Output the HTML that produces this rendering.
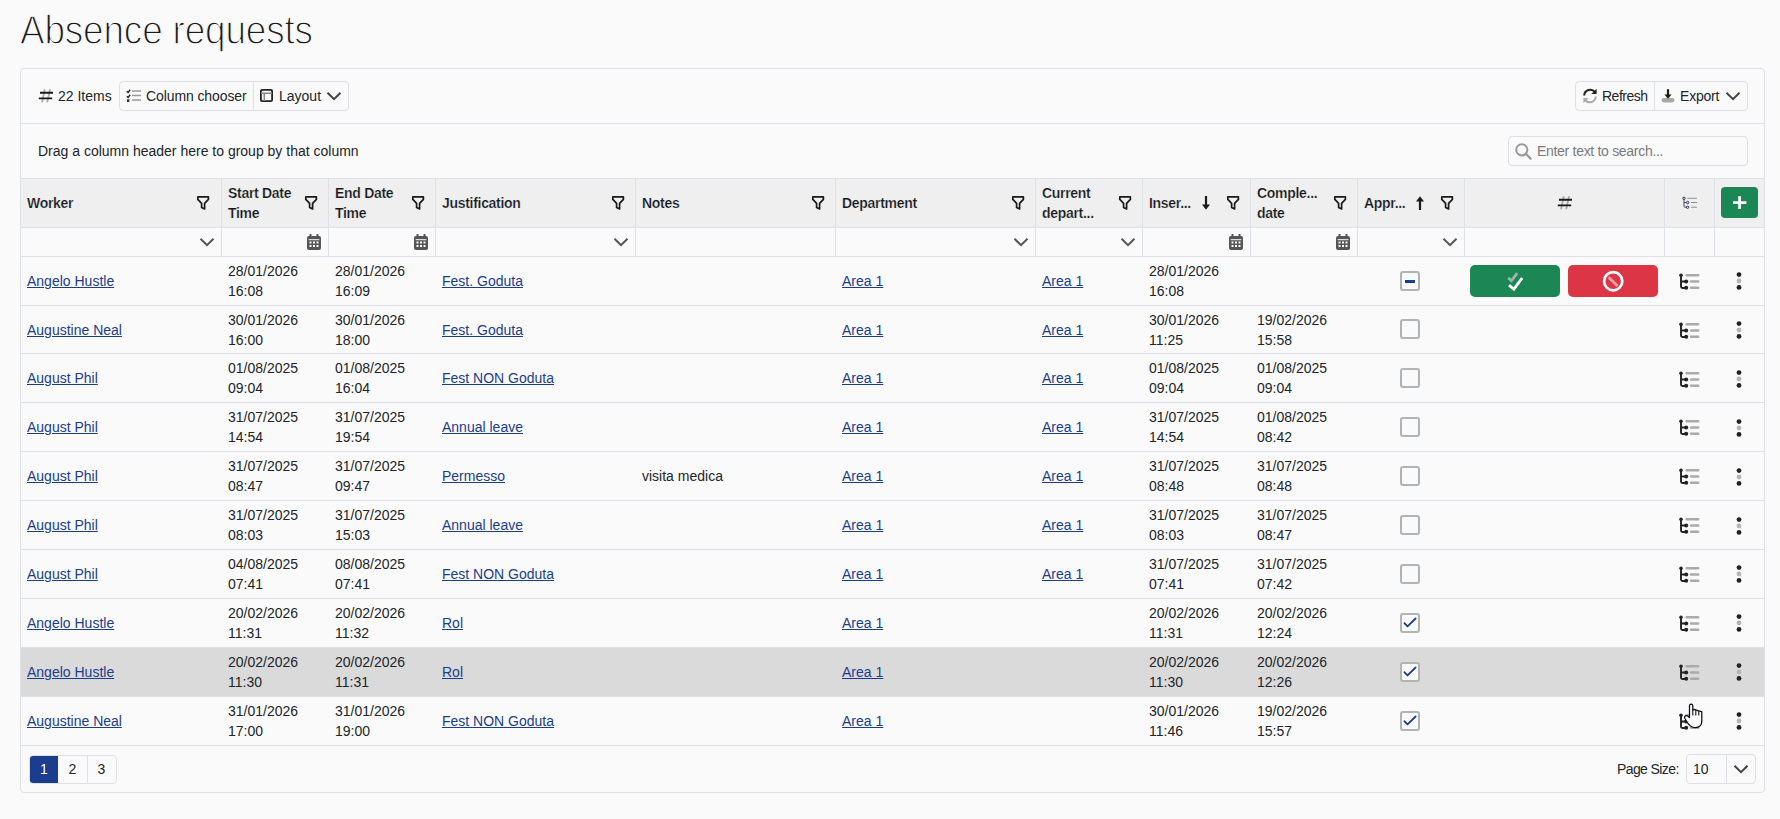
<!DOCTYPE html>
<html><head><meta charset="utf-8"><title>Absence requests</title>
<style>
*{box-sizing:border-box;margin:0;padding:0}
html,body{width:1780px;height:819px;overflow:hidden;background:#fafafa}
body{font-family:"Liberation Sans",sans-serif;font-size:14px;color:#212529;position:relative}
.abs{position:absolute}
.t{position:absolute;white-space:nowrap;line-height:20px}
.title{position:absolute;left:20px;top:3.6px;font-size:41.5px;line-height:52px;color:#1a1a1a;transform:scaleX(0.89);transform-origin:0 0;letter-spacing:-0.2px;-webkit-text-stroke:1.3px #fafafa}
.card{position:absolute;left:20px;top:68px;width:1745px;height:725px;border:1px solid #dde1e6;border-radius:4px;background:#fafafa}
.hl{position:absolute;background:#dde1e6;height:1px}
.vl{position:absolute;background:#dde1e6;width:1px}
.hdr{position:absolute;left:21px;top:179px;width:1743px;height:48px;background:#efefef}
.ht{position:absolute;font-weight:bold;line-height:20px;white-space:nowrap;letter-spacing:-0.3px;color:#15181b;-webkit-text-stroke:0.2px #efefef}
.fi{position:absolute}
a{color:#1b3d8f;text-decoration:underline;text-underline-offset:2px}
.lnk{position:absolute;line-height:20px;white-space:nowrap;color:#1b3d8f;text-decoration:underline;text-underline-offset:0.5px;text-decoration-thickness:1px}
.btngrp{position:absolute;border:1px solid #dde1e6;border-radius:4px;background:#fafafa}
.cb{position:absolute;width:20px;height:20px;border:2px solid #b1b4b7;border-radius:3px;background:#fafafa}
.sel{position:absolute;left:21px;width:1743px;background:#dadada}
</style></head><body>

<div class="title">Absence requests</div>
<div class="card"></div>
<div class="hl" style="left:21px;top:123px;width:1743px"></div>
<svg class="abs" style="left:38px;top:88px" width="16" height="16" viewBox="0 0 16 16"><path d="M6.8 1.3L4 14.2M12 1.3L9.2 14.2" stroke="#aaa" stroke-width="1.8"/><path d="M2 4.8H15M0.8 10.4H14.2" stroke="#1a1a1a" stroke-width="1.9"/></svg>
<div class="t" style="left:58px;top:86px">22 Items</div>
<div class="btngrp" style="left:119px;top:81px;width:230px;height:30px"></div>
<div class="vl" style="left:253px;top:82px;height:28px"></div>
<svg class="abs" style="left:126px;top:89px" width="15" height="13" viewBox="0 0 15 13"><path d="M0.8 2.2l1.3 1.3L4.2 0.8M0.8 7.2l1.3 1.3L4.2 5.8" fill="none" stroke="#222" stroke-width="1.4"/><rect x="1" y="10.4" width="2.4" height="2.4" fill="#222"/><path d="M6 2h9M6 6.5h9M6 11h9" stroke="#999" stroke-width="1.6"/></svg>
<div class="t" style="left:146px;top:86px;letter-spacing:-0.1px">Column chooser</div>
<svg class="abs" style="left:260px;top:89px" width="13" height="13" viewBox="0 0 13 13"><rect x="0.9" y="0.9" width="11.2" height="11.2" rx="1.2" fill="none" stroke="#222" stroke-width="1.8"/><path d="M1 4.3H12M4.3 4.3V12" stroke="#888" stroke-width="1.5"/></svg>
<div class="t" style="left:279px;top:86px">Layout</div>
<svg class="abs" style="left:326px;top:91px" width="16" height="10" viewBox="0 0 16 10"><path d="M1.5 1.8L8 8.2l6.5-6.4" fill="none" stroke="#444" stroke-width="2"/></svg>
<div class="btngrp" style="left:1575px;top:81px;width:173px;height:30px"></div>
<div class="vl" style="left:1654px;top:82px;height:28px"></div>
<svg class="abs" style="left:1582px;top:88px" width="16" height="16" viewBox="0 0 16 16"><path d="M2.2 7.5A6 6 0 0 1 13 4.2" fill="none" stroke="#222" stroke-width="2"/><path d="M14.6 0.8V6H9.4z" fill="#222"/><path d="M13.8 8.5A6 6 0 0 1 3 11.8" fill="none" stroke="#aaa" stroke-width="2"/><path d="M1.4 15.2V10H6.6z" fill="#aaa"/></svg>
<div class="t" style="left:1602px;top:86px;letter-spacing:-0.5px">Refresh</div>
<svg class="abs" style="left:1661px;top:88px" width="14" height="16" viewBox="0 0 14 16"><rect x="0.6" y="10" width="12.8" height="4.4" rx="2.1" fill="#a8a8a8"/><path d="M7 1.2V9" stroke="#1a1a1a" stroke-width="2.2"/><path d="M3.4 6.4L7 10.8L10.6 6.4Z" fill="#1a1a1a"/></svg>
<div class="t" style="left:1680px;top:86px;letter-spacing:-0.2px">Export</div>
<svg class="abs" style="left:1725px;top:91px" width="16" height="10" viewBox="0 0 16 10"><path d="M1.5 1.8L8 8.2l6.5-6.4" fill="none" stroke="#444" stroke-width="2"/></svg>
<div class="t" style="left:38px;top:141px">Drag a column header here to group by that column</div>
<div class="btngrp" style="left:1508px;top:136px;width:240px;height:30px"></div>
<svg class="abs" style="left:1515px;top:143px" width="17" height="17" viewBox="0 0 17 17"><circle cx="6.8" cy="6.8" r="5.6" fill="none" stroke="#999" stroke-width="2"/><path d="M10.8 10.8L15.6 15.6" stroke="#999" stroke-width="2.2" stroke-linecap="round"/></svg>
<div class="t" style="left:1537px;top:141px;color:#7a7a7a;letter-spacing:-0.3px">Enter text to search...</div>
<div class="hl" style="left:21px;top:178px;width:1743px"></div>
<div class="hdr"></div>
<div class="hl" style="left:21px;top:227px;width:1743px"></div>
<div class="hl" style="left:21px;top:256px;width:1743px"></div>
<div class="vl" style="left:221px;top:179px;height:77px"></div>
<div class="vl" style="left:328px;top:179px;height:77px"></div>
<div class="vl" style="left:435px;top:179px;height:77px"></div>
<div class="vl" style="left:635px;top:179px;height:77px"></div>
<div class="vl" style="left:835px;top:179px;height:77px"></div>
<div class="vl" style="left:1035px;top:179px;height:77px"></div>
<div class="vl" style="left:1142px;top:179px;height:77px"></div>
<div class="vl" style="left:1250px;top:179px;height:77px"></div>
<div class="vl" style="left:1357px;top:179px;height:77px"></div>
<div class="vl" style="left:1464px;top:179px;height:77px"></div>
<div class="vl" style="left:1664px;top:179px;height:77px"></div>
<div class="vl" style="left:1714px;top:179px;height:77px"></div>
<div class="ht" style="left:27px;top:193px">Worker</div>
<div class="abs" style="left:196px;top:195px"><svg class="fi" width="14" height="16" viewBox="0 0 14 16"><path d="M1.8 1.9H12.4V4.4L8.6 8.4V13.9L5.6 12.5V8.4L1.8 4.4Z" fill="none" stroke="#1a1a1a" stroke-width="1.7" stroke-linejoin="round"/></svg></div>
<div class="abs" style="left:199px;top:234px"><svg width="16" height="10" viewBox="0 0 16 10"><path d="M1.5 1.8L8 8.2l6.5-6.4" fill="none" stroke="#555" stroke-width="2"/></svg></div>
<div class="ht" style="left:228px;top:183px">Start Date<br>Time</div>
<div class="abs" style="left:304px;top:195px"><svg class="fi" width="14" height="16" viewBox="0 0 14 16"><path d="M1.8 1.9H12.4V4.4L8.6 8.4V13.9L5.6 12.5V8.4L1.8 4.4Z" fill="none" stroke="#1a1a1a" stroke-width="1.7" stroke-linejoin="round"/></svg></div>
<div class="abs" style="left:307px;top:234px"><svg width="14" height="16" viewBox="0 0 14 16"><rect x="0" y="2" width="14" height="14" rx="2" fill="#555"/><rect x="2.5" y="0" width="2" height="4" fill="#555"/><rect x="9.5" y="0" width="2" height="4" fill="#555"/><rect x="1.6" y="5.2" width="10.8" height="1" fill="#fafafa"/><g fill="#fafafa"><rect x="2.5" y="7.5" width="2" height="2"/><rect x="6" y="7.5" width="2" height="2"/><rect x="9.5" y="7.5" width="2" height="2"/><rect x="2.5" y="11" width="2" height="2"/><rect x="6" y="11" width="2" height="2"/><rect x="9.5" y="11" width="2" height="2"/></g></svg></div>
<div class="ht" style="left:335px;top:183px">End Date<br>Time</div>
<div class="abs" style="left:411px;top:195px"><svg class="fi" width="14" height="16" viewBox="0 0 14 16"><path d="M1.8 1.9H12.4V4.4L8.6 8.4V13.9L5.6 12.5V8.4L1.8 4.4Z" fill="none" stroke="#1a1a1a" stroke-width="1.7" stroke-linejoin="round"/></svg></div>
<div class="abs" style="left:414px;top:234px"><svg width="14" height="16" viewBox="0 0 14 16"><rect x="0" y="2" width="14" height="14" rx="2" fill="#555"/><rect x="2.5" y="0" width="2" height="4" fill="#555"/><rect x="9.5" y="0" width="2" height="4" fill="#555"/><rect x="1.6" y="5.2" width="10.8" height="1" fill="#fafafa"/><g fill="#fafafa"><rect x="2.5" y="7.5" width="2" height="2"/><rect x="6" y="7.5" width="2" height="2"/><rect x="9.5" y="7.5" width="2" height="2"/><rect x="2.5" y="11" width="2" height="2"/><rect x="6" y="11" width="2" height="2"/><rect x="9.5" y="11" width="2" height="2"/></g></svg></div>
<div class="ht" style="left:442px;top:193px">Justification</div>
<div class="abs" style="left:611px;top:195px"><svg class="fi" width="14" height="16" viewBox="0 0 14 16"><path d="M1.8 1.9H12.4V4.4L8.6 8.4V13.9L5.6 12.5V8.4L1.8 4.4Z" fill="none" stroke="#1a1a1a" stroke-width="1.7" stroke-linejoin="round"/></svg></div>
<div class="abs" style="left:613px;top:234px"><svg width="16" height="10" viewBox="0 0 16 10"><path d="M1.5 1.8L8 8.2l6.5-6.4" fill="none" stroke="#555" stroke-width="2"/></svg></div>
<div class="ht" style="left:642px;top:193px">Notes</div>
<div class="abs" style="left:811px;top:195px"><svg class="fi" width="14" height="16" viewBox="0 0 14 16"><path d="M1.8 1.9H12.4V4.4L8.6 8.4V13.9L5.6 12.5V8.4L1.8 4.4Z" fill="none" stroke="#1a1a1a" stroke-width="1.7" stroke-linejoin="round"/></svg></div>
<div class="ht" style="left:842px;top:193px">Department</div>
<div class="abs" style="left:1011px;top:195px"><svg class="fi" width="14" height="16" viewBox="0 0 14 16"><path d="M1.8 1.9H12.4V4.4L8.6 8.4V13.9L5.6 12.5V8.4L1.8 4.4Z" fill="none" stroke="#1a1a1a" stroke-width="1.7" stroke-linejoin="round"/></svg></div>
<div class="abs" style="left:1013px;top:234px"><svg width="16" height="10" viewBox="0 0 16 10"><path d="M1.5 1.8L8 8.2l6.5-6.4" fill="none" stroke="#555" stroke-width="2"/></svg></div>
<div class="ht" style="left:1042px;top:183px">Current<br>depart...</div>
<div class="abs" style="left:1118px;top:195px"><svg class="fi" width="14" height="16" viewBox="0 0 14 16"><path d="M1.8 1.9H12.4V4.4L8.6 8.4V13.9L5.6 12.5V8.4L1.8 4.4Z" fill="none" stroke="#1a1a1a" stroke-width="1.7" stroke-linejoin="round"/></svg></div>
<div class="abs" style="left:1120px;top:234px"><svg width="16" height="10" viewBox="0 0 16 10"><path d="M1.5 1.8L8 8.2l6.5-6.4" fill="none" stroke="#555" stroke-width="2"/></svg></div>
<div class="ht" style="left:1149px;top:193px">Inser...</div>
<div class="abs" style="left:1226px;top:195px"><svg class="fi" width="14" height="16" viewBox="0 0 14 16"><path d="M1.8 1.9H12.4V4.4L8.6 8.4V13.9L5.6 12.5V8.4L1.8 4.4Z" fill="none" stroke="#1a1a1a" stroke-width="1.7" stroke-linejoin="round"/></svg></div>
<svg class="abs" style="left:1201px;top:195px" width="10" height="16" viewBox="0 0 10 16"><path d="M5 1V11" stroke="#1a1a1a" stroke-width="2.2"/><path d="M1 9.6L5 14.8L9 9.6Z" fill="#1a1a1a"/></svg>
<div class="abs" style="left:1229px;top:234px"><svg width="14" height="16" viewBox="0 0 14 16"><rect x="0" y="2" width="14" height="14" rx="2" fill="#555"/><rect x="2.5" y="0" width="2" height="4" fill="#555"/><rect x="9.5" y="0" width="2" height="4" fill="#555"/><rect x="1.6" y="5.2" width="10.8" height="1" fill="#fafafa"/><g fill="#fafafa"><rect x="2.5" y="7.5" width="2" height="2"/><rect x="6" y="7.5" width="2" height="2"/><rect x="9.5" y="7.5" width="2" height="2"/><rect x="2.5" y="11" width="2" height="2"/><rect x="6" y="11" width="2" height="2"/><rect x="9.5" y="11" width="2" height="2"/></g></svg></div>
<div class="ht" style="left:1257px;top:183px">Comple...<br>date</div>
<div class="abs" style="left:1333px;top:195px"><svg class="fi" width="14" height="16" viewBox="0 0 14 16"><path d="M1.8 1.9H12.4V4.4L8.6 8.4V13.9L5.6 12.5V8.4L1.8 4.4Z" fill="none" stroke="#1a1a1a" stroke-width="1.7" stroke-linejoin="round"/></svg></div>
<div class="abs" style="left:1336px;top:234px"><svg width="14" height="16" viewBox="0 0 14 16"><rect x="0" y="2" width="14" height="14" rx="2" fill="#555"/><rect x="2.5" y="0" width="2" height="4" fill="#555"/><rect x="9.5" y="0" width="2" height="4" fill="#555"/><rect x="1.6" y="5.2" width="10.8" height="1" fill="#fafafa"/><g fill="#fafafa"><rect x="2.5" y="7.5" width="2" height="2"/><rect x="6" y="7.5" width="2" height="2"/><rect x="9.5" y="7.5" width="2" height="2"/><rect x="2.5" y="11" width="2" height="2"/><rect x="6" y="11" width="2" height="2"/><rect x="9.5" y="11" width="2" height="2"/></g></svg></div>
<div class="ht" style="left:1364px;top:193px">Appr...</div>
<div class="abs" style="left:1440px;top:195px"><svg class="fi" width="14" height="16" viewBox="0 0 14 16"><path d="M1.8 1.9H12.4V4.4L8.6 8.4V13.9L5.6 12.5V8.4L1.8 4.4Z" fill="none" stroke="#1a1a1a" stroke-width="1.7" stroke-linejoin="round"/></svg></div>
<svg class="abs" style="left:1415px;top:195px" width="10" height="16" viewBox="0 0 10 16"><path d="M5 15V5" stroke="#1a1a1a" stroke-width="2.2"/><path d="M1 6.4L5 1.2L9 6.4Z" fill="#1a1a1a"/></svg>
<div class="abs" style="left:1442px;top:234px"><svg width="16" height="10" viewBox="0 0 16 10"><path d="M1.5 1.8L8 8.2l6.5-6.4" fill="none" stroke="#555" stroke-width="2"/></svg></div>
<svg class="abs" style="left:1557px;top:195px" width="16" height="16" viewBox="0 0 16 16"><path d="M6.8 1.3L4 14.2M12 1.3L9.2 14.2" stroke="#aaa" stroke-width="1.8"/><path d="M2 4.8H15M0.8 10.4H14.2" stroke="#1a1a1a" stroke-width="1.9"/></svg>
<svg class="abs" style="left:1681px;top:195px" width="18" height="16" viewBox="0 0 18 16"><path d="M3 4.4V11.2Q3 12.2 4 12.2H5.4M3 7.5H5.4" fill="none" stroke="#3a4a66" stroke-width="1"/><g fill="none" stroke="#2b3550" stroke-width="1"><circle cx="3" cy="3.3" r="1.2"/><circle cx="6.6" cy="7.5" r="1.2"/><circle cx="6.6" cy="12.2" r="1.2"/></g><path d="M6.3 3.3H15.9M10 7.5H16M10 12.2H16" stroke="#8a8f99" stroke-width="1"/></svg>
<div class="abs" style="left:1721px;top:187px;width:37px;height:31px;background:#1a8754;border-radius:4px"></div>
<svg class="abs" style="left:1731px;top:194px" width="17" height="17" viewBox="0 0 17 17"><path d="M8.6 2.3V15M2 8.6H15.4" stroke="#fff" stroke-width="2.8"/></svg>
<div class="hl" style="left:21px;top:305px;width:1743px"></div>
<div class="lnk" style="left:27px;top:271px">Angelo Hustle</div>
<div class="t" style="left:228px;top:261px">28/01/2026<br>16:08</div>
<div class="t" style="left:335px;top:261px">28/01/2026<br>16:09</div>
<div class="lnk" style="left:442px;top:271px">Fest. Goduta</div>
<div class="lnk" style="left:842px;top:271px">Area 1</div>
<div class="lnk" style="left:1042px;top:271px">Area 1</div>
<div class="t" style="left:1149px;top:261px">28/01/2026<br>16:08</div>
<div class="cb" style="left:1400px;top:271px"></div>
<div class="abs" style="left:1405px;top:280px;width:10px;height:2.5px;background:#1b3d8f"></div>
<div class="abs" style="left:1470px;top:265px;width:90px;height:32px;background:#1a8754;border-radius:5px"></div>
<svg class="abs" style="left:1505px;top:271px" width="20" height="20" viewBox="0 0 20 20"><path d="M3.2 6.9L6.4 9.8L12.2 2.2" fill="none" stroke="#9db5a8" stroke-width="2.8"/><path d="M4 14.1L8.9 18.2L17.2 7" fill="none" stroke="#fff" stroke-width="2.8"/></svg>
<div class="abs" style="left:1568px;top:265px;width:90px;height:32px;background:#dc3545;border-radius:5px"></div>
<svg class="abs" style="left:1602px;top:270px" width="24" height="24" viewBox="0 0 24 24"><circle cx="11.2" cy="11.2" r="9.1" fill="none" stroke="#fff" stroke-width="2.7"/><path d="M6.6 7.2L15.6 16" stroke="#eaa2aa" stroke-width="2.8"/></svg>
<div class="abs" style="left:1678px;top:273px"><svg width="22" height="18" viewBox="0 0 22 18"><g fill="none" stroke="#222" stroke-width="1.9"><path d="M3 2.5V13.5Q3 15 4.5 15H8M3 8.5H8"/></g><g fill="#222"><circle cx="3" cy="2.2" r="1.8"/><circle cx="8.2" cy="8.5" r="2"/><circle cx="8.2" cy="14.8" r="2"/></g><g stroke="#aaa" stroke-width="2.5" stroke-linecap="round"><path d="M8.6 2.3H20.2M13.1 8.5H20.2M13.1 14.8H20.2"/></g></svg></div>
<div class="abs" style="left:1736px;top:272px"><svg width="6" height="18" viewBox="0 0 6 18"><circle cx="3" cy="2.6" r="2.4" fill="#222"/><circle cx="3" cy="9" r="2.4" fill="#b5b5b5"/><circle cx="3" cy="15.4" r="2.4" fill="#222"/></svg></div>
<div class="hl" style="left:21px;top:353px;width:1743px"></div>
<div class="lnk" style="left:27px;top:320px">Augustine Neal</div>
<div class="t" style="left:228px;top:310px">30/01/2026<br>16:00</div>
<div class="t" style="left:335px;top:310px">30/01/2026<br>18:00</div>
<div class="lnk" style="left:442px;top:320px">Fest. Goduta</div>
<div class="lnk" style="left:842px;top:320px">Area 1</div>
<div class="lnk" style="left:1042px;top:320px">Area 1</div>
<div class="t" style="left:1149px;top:310px">30/01/2026<br>11:25</div>
<div class="t" style="left:1257px;top:310px">19/02/2026<br>15:58</div>
<div class="cb" style="left:1400px;top:319px"></div>
<div class="abs" style="left:1678px;top:322px"><svg width="22" height="18" viewBox="0 0 22 18"><g fill="none" stroke="#222" stroke-width="1.9"><path d="M3 2.5V13.5Q3 15 4.5 15H8M3 8.5H8"/></g><g fill="#222"><circle cx="3" cy="2.2" r="1.8"/><circle cx="8.2" cy="8.5" r="2"/><circle cx="8.2" cy="14.8" r="2"/></g><g stroke="#aaa" stroke-width="2.5" stroke-linecap="round"><path d="M8.6 2.3H20.2M13.1 8.5H20.2M13.1 14.8H20.2"/></g></svg></div>
<div class="abs" style="left:1736px;top:321px"><svg width="6" height="18" viewBox="0 0 6 18"><circle cx="3" cy="2.6" r="2.4" fill="#222"/><circle cx="3" cy="9" r="2.4" fill="#b5b5b5"/><circle cx="3" cy="15.4" r="2.4" fill="#222"/></svg></div>
<div class="hl" style="left:21px;top:402px;width:1743px"></div>
<div class="lnk" style="left:27px;top:368px">August Phil</div>
<div class="t" style="left:228px;top:358px">01/08/2025<br>09:04</div>
<div class="t" style="left:335px;top:358px">01/08/2025<br>16:04</div>
<div class="lnk" style="left:442px;top:368px">Fest NON Goduta</div>
<div class="lnk" style="left:842px;top:368px">Area 1</div>
<div class="lnk" style="left:1042px;top:368px">Area 1</div>
<div class="t" style="left:1149px;top:358px">01/08/2025<br>09:04</div>
<div class="t" style="left:1257px;top:358px">01/08/2025<br>09:04</div>
<div class="cb" style="left:1400px;top:368px"></div>
<div class="abs" style="left:1678px;top:371px"><svg width="22" height="18" viewBox="0 0 22 18"><g fill="none" stroke="#222" stroke-width="1.9"><path d="M3 2.5V13.5Q3 15 4.5 15H8M3 8.5H8"/></g><g fill="#222"><circle cx="3" cy="2.2" r="1.8"/><circle cx="8.2" cy="8.5" r="2"/><circle cx="8.2" cy="14.8" r="2"/></g><g stroke="#aaa" stroke-width="2.5" stroke-linecap="round"><path d="M8.6 2.3H20.2M13.1 8.5H20.2M13.1 14.8H20.2"/></g></svg></div>
<div class="abs" style="left:1736px;top:370px"><svg width="6" height="18" viewBox="0 0 6 18"><circle cx="3" cy="2.6" r="2.4" fill="#222"/><circle cx="3" cy="9" r="2.4" fill="#b5b5b5"/><circle cx="3" cy="15.4" r="2.4" fill="#222"/></svg></div>
<div class="hl" style="left:21px;top:451px;width:1743px"></div>
<div class="lnk" style="left:27px;top:417px">August Phil</div>
<div class="t" style="left:228px;top:407px">31/07/2025<br>14:54</div>
<div class="t" style="left:335px;top:407px">31/07/2025<br>19:54</div>
<div class="lnk" style="left:442px;top:417px">Annual leave</div>
<div class="lnk" style="left:842px;top:417px">Area 1</div>
<div class="lnk" style="left:1042px;top:417px">Area 1</div>
<div class="t" style="left:1149px;top:407px">31/07/2025<br>14:54</div>
<div class="t" style="left:1257px;top:407px">01/08/2025<br>08:42</div>
<div class="cb" style="left:1400px;top:417px"></div>
<div class="abs" style="left:1678px;top:419px"><svg width="22" height="18" viewBox="0 0 22 18"><g fill="none" stroke="#222" stroke-width="1.9"><path d="M3 2.5V13.5Q3 15 4.5 15H8M3 8.5H8"/></g><g fill="#222"><circle cx="3" cy="2.2" r="1.8"/><circle cx="8.2" cy="8.5" r="2"/><circle cx="8.2" cy="14.8" r="2"/></g><g stroke="#aaa" stroke-width="2.5" stroke-linecap="round"><path d="M8.6 2.3H20.2M13.1 8.5H20.2M13.1 14.8H20.2"/></g></svg></div>
<div class="abs" style="left:1736px;top:419px"><svg width="6" height="18" viewBox="0 0 6 18"><circle cx="3" cy="2.6" r="2.4" fill="#222"/><circle cx="3" cy="9" r="2.4" fill="#b5b5b5"/><circle cx="3" cy="15.4" r="2.4" fill="#222"/></svg></div>
<div class="hl" style="left:21px;top:500px;width:1743px"></div>
<div class="lnk" style="left:27px;top:466px">August Phil</div>
<div class="t" style="left:228px;top:456px">31/07/2025<br>08:47</div>
<div class="t" style="left:335px;top:456px">31/07/2025<br>09:47</div>
<div class="lnk" style="left:442px;top:466px">Permesso</div>
<div class="t" style="left:642px;top:466px">visita medica</div>
<div class="lnk" style="left:842px;top:466px">Area 1</div>
<div class="lnk" style="left:1042px;top:466px">Area 1</div>
<div class="t" style="left:1149px;top:456px">31/07/2025<br>08:48</div>
<div class="t" style="left:1257px;top:456px">31/07/2025<br>08:48</div>
<div class="cb" style="left:1400px;top:466px"></div>
<div class="abs" style="left:1678px;top:468px"><svg width="22" height="18" viewBox="0 0 22 18"><g fill="none" stroke="#222" stroke-width="1.9"><path d="M3 2.5V13.5Q3 15 4.5 15H8M3 8.5H8"/></g><g fill="#222"><circle cx="3" cy="2.2" r="1.8"/><circle cx="8.2" cy="8.5" r="2"/><circle cx="8.2" cy="14.8" r="2"/></g><g stroke="#aaa" stroke-width="2.5" stroke-linecap="round"><path d="M8.6 2.3H20.2M13.1 8.5H20.2M13.1 14.8H20.2"/></g></svg></div>
<div class="abs" style="left:1736px;top:468px"><svg width="6" height="18" viewBox="0 0 6 18"><circle cx="3" cy="2.6" r="2.4" fill="#222"/><circle cx="3" cy="9" r="2.4" fill="#b5b5b5"/><circle cx="3" cy="15.4" r="2.4" fill="#222"/></svg></div>
<div class="hl" style="left:21px;top:549px;width:1743px"></div>
<div class="lnk" style="left:27px;top:515px">August Phil</div>
<div class="t" style="left:228px;top:505px">31/07/2025<br>08:03</div>
<div class="t" style="left:335px;top:505px">31/07/2025<br>15:03</div>
<div class="lnk" style="left:442px;top:515px">Annual leave</div>
<div class="lnk" style="left:842px;top:515px">Area 1</div>
<div class="lnk" style="left:1042px;top:515px">Area 1</div>
<div class="t" style="left:1149px;top:505px">31/07/2025<br>08:03</div>
<div class="t" style="left:1257px;top:505px">31/07/2025<br>08:47</div>
<div class="cb" style="left:1400px;top:515px"></div>
<div class="abs" style="left:1678px;top:517px"><svg width="22" height="18" viewBox="0 0 22 18"><g fill="none" stroke="#222" stroke-width="1.9"><path d="M3 2.5V13.5Q3 15 4.5 15H8M3 8.5H8"/></g><g fill="#222"><circle cx="3" cy="2.2" r="1.8"/><circle cx="8.2" cy="8.5" r="2"/><circle cx="8.2" cy="14.8" r="2"/></g><g stroke="#aaa" stroke-width="2.5" stroke-linecap="round"><path d="M8.6 2.3H20.2M13.1 8.5H20.2M13.1 14.8H20.2"/></g></svg></div>
<div class="abs" style="left:1736px;top:517px"><svg width="6" height="18" viewBox="0 0 6 18"><circle cx="3" cy="2.6" r="2.4" fill="#222"/><circle cx="3" cy="9" r="2.4" fill="#b5b5b5"/><circle cx="3" cy="15.4" r="2.4" fill="#222"/></svg></div>
<div class="hl" style="left:21px;top:598px;width:1743px"></div>
<div class="lnk" style="left:27px;top:564px">August Phil</div>
<div class="t" style="left:228px;top:554px">04/08/2025<br>07:41</div>
<div class="t" style="left:335px;top:554px">08/08/2025<br>07:41</div>
<div class="lnk" style="left:442px;top:564px">Fest NON Goduta</div>
<div class="lnk" style="left:842px;top:564px">Area 1</div>
<div class="lnk" style="left:1042px;top:564px">Area 1</div>
<div class="t" style="left:1149px;top:554px">31/07/2025<br>07:41</div>
<div class="t" style="left:1257px;top:554px">31/07/2025<br>07:42</div>
<div class="cb" style="left:1400px;top:564px"></div>
<div class="abs" style="left:1678px;top:566px"><svg width="22" height="18" viewBox="0 0 22 18"><g fill="none" stroke="#222" stroke-width="1.9"><path d="M3 2.5V13.5Q3 15 4.5 15H8M3 8.5H8"/></g><g fill="#222"><circle cx="3" cy="2.2" r="1.8"/><circle cx="8.2" cy="8.5" r="2"/><circle cx="8.2" cy="14.8" r="2"/></g><g stroke="#aaa" stroke-width="2.5" stroke-linecap="round"><path d="M8.6 2.3H20.2M13.1 8.5H20.2M13.1 14.8H20.2"/></g></svg></div>
<div class="abs" style="left:1736px;top:565px"><svg width="6" height="18" viewBox="0 0 6 18"><circle cx="3" cy="2.6" r="2.4" fill="#222"/><circle cx="3" cy="9" r="2.4" fill="#b5b5b5"/><circle cx="3" cy="15.4" r="2.4" fill="#222"/></svg></div>
<div class="hl" style="left:21px;top:647px;width:1743px"></div>
<div class="lnk" style="left:27px;top:613px">Angelo Hustle</div>
<div class="t" style="left:228px;top:603px">20/02/2026<br>11:31</div>
<div class="t" style="left:335px;top:603px">20/02/2026<br>11:32</div>
<div class="lnk" style="left:442px;top:613px">Rol</div>
<div class="lnk" style="left:842px;top:613px">Area 1</div>
<div class="t" style="left:1149px;top:603px">20/02/2026<br>11:31</div>
<div class="t" style="left:1257px;top:603px">20/02/2026<br>12:24</div>
<div class="cb" style="left:1400px;top:613px"></div>
<svg class="abs" style="left:1403px;top:616px" width="14" height="14" viewBox="0 0 14 14"><path d="M1.4 7.1L4.5 10.4L12.6 2.5" fill="none" stroke="#1b3d8f" stroke-width="1.8" stroke-linecap="round" stroke-linejoin="round"/></svg>
<div class="abs" style="left:1678px;top:615px"><svg width="22" height="18" viewBox="0 0 22 18"><g fill="none" stroke="#222" stroke-width="1.9"><path d="M3 2.5V13.5Q3 15 4.5 15H8M3 8.5H8"/></g><g fill="#222"><circle cx="3" cy="2.2" r="1.8"/><circle cx="8.2" cy="8.5" r="2"/><circle cx="8.2" cy="14.8" r="2"/></g><g stroke="#aaa" stroke-width="2.5" stroke-linecap="round"><path d="M8.6 2.3H20.2M13.1 8.5H20.2M13.1 14.8H20.2"/></g></svg></div>
<div class="abs" style="left:1736px;top:614px"><svg width="6" height="18" viewBox="0 0 6 18"><circle cx="3" cy="2.6" r="2.4" fill="#222"/><circle cx="3" cy="9" r="2.4" fill="#b5b5b5"/><circle cx="3" cy="15.4" r="2.4" fill="#222"/></svg></div>
<div class="sel" style="top:648px;height:48px"></div>
<div class="hl" style="left:21px;top:696px;width:1743px"></div>
<div class="lnk" style="left:27px;top:662px">Angelo Hustle</div>
<div class="t" style="left:228px;top:652px">20/02/2026<br>11:30</div>
<div class="t" style="left:335px;top:652px">20/02/2026<br>11:31</div>
<div class="lnk" style="left:442px;top:662px">Rol</div>
<div class="lnk" style="left:842px;top:662px">Area 1</div>
<div class="t" style="left:1149px;top:652px">20/02/2026<br>11:30</div>
<div class="t" style="left:1257px;top:652px">20/02/2026<br>12:26</div>
<div class="cb" style="left:1400px;top:662px"></div>
<svg class="abs" style="left:1403px;top:665px" width="14" height="14" viewBox="0 0 14 14"><path d="M1.4 7.1L4.5 10.4L12.6 2.5" fill="none" stroke="#1b3d8f" stroke-width="1.8" stroke-linecap="round" stroke-linejoin="round"/></svg>
<div class="abs" style="left:1678px;top:664px"><svg width="22" height="18" viewBox="0 0 22 18"><g fill="none" stroke="#222" stroke-width="1.9"><path d="M3 2.5V13.5Q3 15 4.5 15H8M3 8.5H8"/></g><g fill="#222"><circle cx="3" cy="2.2" r="1.8"/><circle cx="8.2" cy="8.5" r="2"/><circle cx="8.2" cy="14.8" r="2"/></g><g stroke="#aaa" stroke-width="2.5" stroke-linecap="round"><path d="M8.6 2.3H20.2M13.1 8.5H20.2M13.1 14.8H20.2"/></g></svg></div>
<div class="abs" style="left:1736px;top:663px"><svg width="6" height="18" viewBox="0 0 6 18"><circle cx="3" cy="2.6" r="2.4" fill="#222"/><circle cx="3" cy="9" r="2.4" fill="#b5b5b5"/><circle cx="3" cy="15.4" r="2.4" fill="#222"/></svg></div>
<div class="hl" style="left:21px;top:745px;width:1743px"></div>
<div class="lnk" style="left:27px;top:711px">Augustine Neal</div>
<div class="t" style="left:228px;top:701px">31/01/2026<br>17:00</div>
<div class="t" style="left:335px;top:701px">31/01/2026<br>19:00</div>
<div class="lnk" style="left:442px;top:711px">Fest NON Goduta</div>
<div class="lnk" style="left:842px;top:711px">Area 1</div>
<div class="t" style="left:1149px;top:701px">30/01/2026<br>11:46</div>
<div class="t" style="left:1257px;top:701px">19/02/2026<br>15:57</div>
<div class="cb" style="left:1400px;top:711px"></div>
<svg class="abs" style="left:1403px;top:714px" width="14" height="14" viewBox="0 0 14 14"><path d="M1.4 7.1L4.5 10.4L12.6 2.5" fill="none" stroke="#1b3d8f" stroke-width="1.8" stroke-linecap="round" stroke-linejoin="round"/></svg>
<div class="abs" style="left:1678px;top:713px"><svg width="22" height="18" viewBox="0 0 22 18"><g fill="none" stroke="#222" stroke-width="1.9"><path d="M3 2.5V13.5Q3 15 4.5 15H8M3 8.5H8"/></g><g fill="#222"><circle cx="3" cy="2.2" r="1.8"/><circle cx="8.2" cy="8.5" r="2"/><circle cx="8.2" cy="14.8" r="2"/></g><g stroke="#aaa" stroke-width="2.5" stroke-linecap="round"><path d="M8.6 2.3H20.2M13.1 8.5H20.2M13.1 14.8H20.2"/></g></svg></div>
<div class="abs" style="left:1736px;top:712px"><svg width="6" height="18" viewBox="0 0 6 18"><circle cx="3" cy="2.6" r="2.4" fill="#222"/><circle cx="3" cy="9" r="2.4" fill="#b5b5b5"/><circle cx="3" cy="15.4" r="2.4" fill="#222"/></svg></div>
<div class="btngrp" style="left:29px;top:755px;width:88px;height:29px"></div>
<div class="abs" style="left:30px;top:756px;width:28px;height:27px;background:#1b3d8f;border-radius:3px 0 0 3px"></div>
<div class="vl" style="left:87px;top:756px;height:27px"></div>
<div class="t" style="left:30px;top:759px;width:28px;text-align:center;color:#fff">1</div>
<div class="t" style="left:58px;top:759px;width:29px;text-align:center">2</div>
<div class="t" style="left:87px;top:759px;width:29px;text-align:center">3</div>
<div class="t" style="left:1617px;top:759px;letter-spacing:-0.6px">Page Size:</div>
<div class="btngrp" style="left:1686px;top:754px;width:70px;height:30px"></div>
<div class="vl" style="left:1726px;top:755px;height:28px"></div>
<div class="t" style="left:1693px;top:759px">10</div>
<svg class="abs" style="left:1733px;top:764px" width="16" height="10" viewBox="0 0 16 10"><path d="M1.5 1.8L8 8.2l6.5-6.4" fill="none" stroke="#444" stroke-width="2"/></svg>
<svg class="abs" style="left:1682px;top:702px" width="22" height="28" viewBox="0 0 22 28"><path d="M7.5 15.5V4Q7.5 2 9.15 2Q10.8 2 10.8 4V7.9Q12.3 7.1 13.8 7.9Q15.3 8.3 16.8 9.1Q18.3 8.8 19.8 9.8V19Q19.8 25.5 13.2 25.5Q8.3 25.5 5.2 20.2L2.8 16.2Q2.2 14 4 13.6Q5.6 13.3 7.5 15.5Z" fill="#fff" stroke="#0a0a14" stroke-width="1.25" stroke-linejoin="round"/><path d="M10.8 8V13.6M13.8 8.2V13.6M16.8 9.3V13.6" stroke="#0a0a14" stroke-width="1.1"/></svg>
</body></html>
